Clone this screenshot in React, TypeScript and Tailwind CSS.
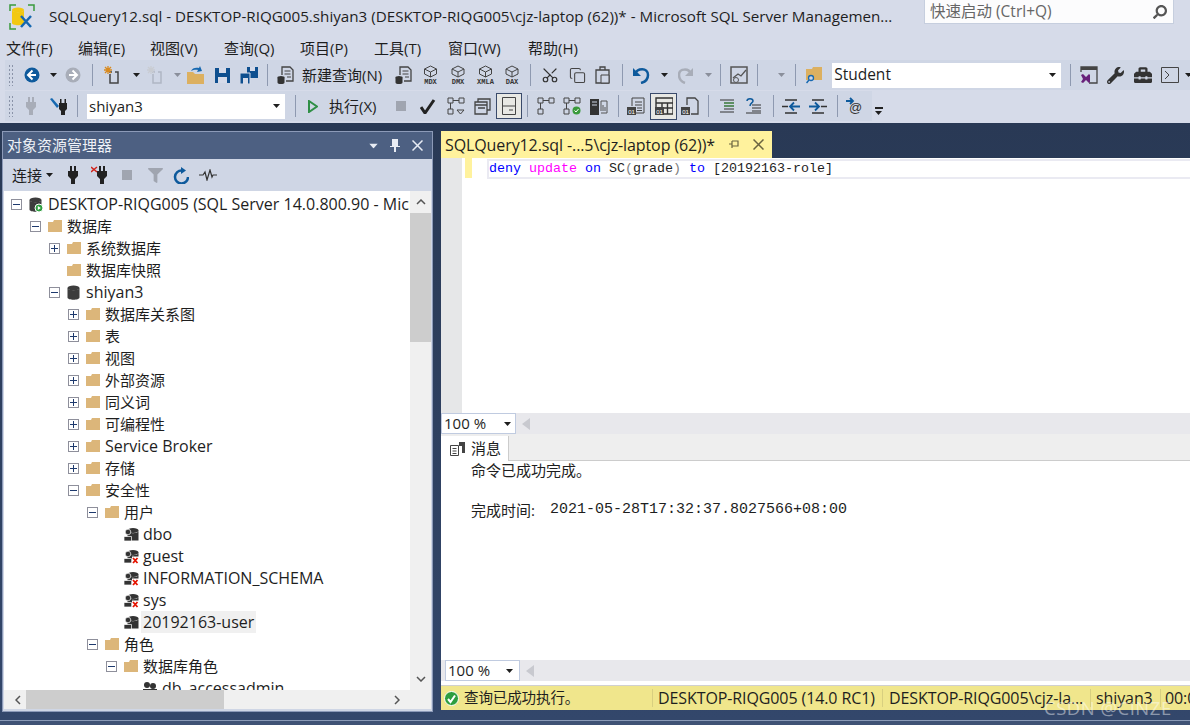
import type { ReactNode } from "react";
import { Copy, Scissors } from "lucide-react";
import { FaToolbox, FaWrench, FaFilter, FaSearch } from "react-icons/fa";

const Svg = ({ w, h, className = "", children }: { w: number; h: number; className?: string; children: ReactNode }) => (
  <svg width={w} height={h} viewBox={`0 0 ${w} ${h}`} className={`shrink-0 ${className}`}>
    {children}
  </svg>
);

const Grip = ({ className = "" }: { className?: string }) => (
  <div className={`w-[5px] h-[22px] shrink-0 bg-[radial-gradient(#8a93a8_1px,transparent_1px)] bg-[length:3px_4px] ${className}`} />
);
const Sep = ({ className = "" }: { className?: string }) => <div className={`w-px h-[22px] shrink-0 bg-[#8e99b0] ${className}`} />;
const Drop = ({ className = "", color = "#1e1e1e" }: { className?: string; color?: string }) => (
  <Svg w={7} h={4} className={className}>
    <path d="M0 0h7L3.5 4z" fill={color} />
  </Svg>
);

const Folder = ({ className = "" }: { className?: string }) => (
  <Svg w={14} h={12} className={className}>
    <path d="M0 2h5l1-2h8v12H0z" fill="#dcb67a" />
  </Svg>
);

const Circle = ({ dir, color, className = "" }: { dir: "l" | "r"; color: string; className?: string }) => (
  <Svg w={16} h={16} className={className}>
    <circle cx="8" cy="8" r="7.5" fill={color} />
    <path d={dir === "l" ? "M8.5 3.5 4 8l4.5 4.5M4.5 8H12" : "M7.5 3.5 12 8l-4.5 4.5M11.5 8H4"} stroke="#fff" strokeWidth="2" fill="none" />
  </Svg>
);

const NewItem = ({ muted, className = "" }: { muted?: boolean; className?: string }) => (
  <Svg w={20} h={20} className={className}>
    <path d="M6 7h3m3 0h3v11H7v-9" stroke={muted ? "#b0b6c4" : "#444"} strokeWidth="1.5" fill="none" />
    <path d="M5 1v8M1 5h8M2 2l6 6M8 2 2 8" stroke={muted ? "#c9ccd2" : "#d98a1f"} strokeWidth="1.3" />
  </Svg>
);

const Floppy = ({ className = "" }: { className?: string }) => (
  <Svg w={15} h={15} className={className}>
    <path d="M0 0h15v15H0z" fill="#0e4f8f" />
    <path d="M4 0h7v5H4zM3 9h9v6H3z" fill="#d6dbe9" />
  </Svg>
);

const SaveAll = ({ className = "" }: { className?: string }) => (
  <Svg w={18} h={17} className={className}>
    <path d="M7 0h11v11H7z" fill="#0e4f8f" />
    <path d="M10 0h5v4h-5z" fill="#d6dbe9" />
    <path d="M0 6h10v11H0z" fill="#0e4f8f" stroke="#d6dbe9" />
    <path d="M3 11h5v6H3z" fill="#d6dbe9" />
  </Svg>
);

const QueryDoc = ({ className = "" }: { className?: string }) => (
  <Svg w={18} h={18} className={className}>
    <path d="M5 9V1h8l3 3v11H9" stroke="#444" strokeWidth="1.3" fill="none" />
    <path d="M7.5 5h6M7.5 8h6M10 11h4" stroke="#444" />
    <ellipse cx="4" cy="11.5" rx="3.5" ry="1.5" fill="#333" />
    <path d="M.5 11.5v5c0 2 7 2 7 0v-5z" fill="#333" />
  </Svg>
);

const Cube = ({ label, w, className = "" }: { label: string; w: number; className?: string }) => (
  <Svg w={w} h={20} className={className}>
    <path d={`M${w / 2} 1l6 3v5l-6 3-6-3V4zM${w / 2 - 6} 4l6 3 6-3M${w / 2} 7v5`} stroke="#444" fill="none" />
    <text x={w / 2} y="19" textAnchor="middle" fontSize="7" fontWeight="700" fontFamily="Liberation Mono, monospace" fill="#333">
      {label}
    </text>
  </Svg>
);

const Plug = ({ color, className = "" }: { color: string; className?: string }) => (
  <Svg w={10} h={18} className={className}>
    <path d="M2 0h2v5H2zM6 0h2v5H6zM0 5h10v5l-3 3v5H3v-5l-3-3z" fill={color} />
  </Svg>
);

const Plan = ({ variant, className = "" }: { variant: "a" | "b" | "c"; className?: string }) => (
  <Svg w={18} h={18} className={className}>
    <path d="M1 1h5v5H1zM1 12h5v5H1zM12 1h5v5h-5z" fill="none" stroke="#444" />
    <path d="M6 3.5h6M3.5 6v6" stroke="#444" />
    {variant === "a" && <path d="M10 13h7l-3.5 4z" fill="none" stroke="#444" />}
    {variant === "c" && <circle cx="13.5" cy="13.5" r="4" fill="#3a9b3c" />}
    {variant === "c" && <path d="M11.5 13.5l1.5 1.5 2.5-3" stroke="#fff" fill="none" />}
  </Svg>
);

const Result = ({ variant, className = "" }: { variant: "text" | "grid" | "file"; className?: string }) => (
  <Svg w={18} h={18} className={className}>
    {variant === "text" && <path d="M5 9V1h12v15H9M8 5h7M8 8h7M10 11h5M10 13.5h5" stroke="#444" fill="none" />}
    {variant === "grid" && <path d="M1 1h17v5H1zM1 6h17v11H1zM7 6v11M12.500 6v11M1 11h17" stroke="#333" strokeWidth="1.4" fill="none" />}
    {variant === "file" && <path d="M6 8V1h8l3 3v13H10" stroke="#444" strokeWidth="1.3" fill="none" />}
    <path d="M0 10h9v8H0z" fill="#444" />
    <text x="4.500" y="16.500" fontSize="6" textAnchor="middle" fontFamily="Liberation Sans, sans-serif" fill="#fff">
      01
    </text>
  </Svg>
);

const UserDb = ({ denied, className = "" }: { denied?: boolean; className?: string }) => (
  <Svg w={15} h={15} className={className}>
    <ellipse cx="9" cy="3.500" rx="5.500" ry="2.500" fill="#333" />
    <path d="M3.500 4v9.500h11V4c-1 3-10 3-11 0z" fill="#333" />
    <circle cx="4" cy="5" r="2.800" fill="#333" stroke="#fff" strokeWidth=".7" />
    <path d="M0 14V9.500h7.500V14z" fill="#333" stroke="#fff" strokeWidth=".7" />
    {denied && <rect x="8" y="7.500" width="7" height="7.500" fill="#fff" />}
    {denied && <path d="M9 9l4.500 5M13.500 9 9 14" stroke="#e51400" strokeWidth="1.800" />}
  </Svg>
);

const Expander = ({ open }: { open: boolean }) => (
  <span className="w-[11px] h-[11px] border border-[#8e8f9b] bg-white flex items-center justify-center shrink-0 relative">
    <span className="w-[7px] h-px bg-[#1e3a6e]" />
    {!open && <span className="absolute w-px h-[7px] bg-[#1e3a6e]" />}
  </span>
);

type Row = { n: number; label: string; exp?: "open" | "closed"; icon: "folder" | "db" | "server" | "user" | "denied" | "role"; selected?: boolean };

const rows: Row[] = [
  { n: 0, label: "DESKTOP-RIQG005 (SQL Server 14.0.800.90 - Microsoft SQL Server)", exp: "open", icon: "server" },
  { n: 1, label: "数据库", exp: "open", icon: "folder" },
  { n: 2, label: "系统数据库", exp: "closed", icon: "folder" },
  { n: 2, label: "数据库快照", icon: "folder" },
  { n: 2, label: "shiyan3", exp: "open", icon: "db" },
  { n: 3, label: "数据库关系图", exp: "closed", icon: "folder" },
  { n: 3, label: "表", exp: "closed", icon: "folder" },
  { n: 3, label: "视图", exp: "closed", icon: "folder" },
  { n: 3, label: "外部资源", exp: "closed", icon: "folder" },
  { n: 3, label: "同义词", exp: "closed", icon: "folder" },
  { n: 3, label: "可编程性", exp: "closed", icon: "folder" },
  { n: 3, label: "Service Broker", exp: "closed", icon: "folder" },
  { n: 3, label: "存储", exp: "closed", icon: "folder" },
  { n: 3, label: "安全性", exp: "open", icon: "folder" },
  { n: 4, label: "用户", exp: "open", icon: "folder" },
  { n: 5, label: "dbo", icon: "user" },
  { n: 5, label: "guest", icon: "denied" },
  { n: 5, label: "INFORMATION_SCHEMA", icon: "denied" },
  { n: 5, label: "sys", icon: "denied" },
  { n: 5, label: "20192163-user", icon: "user", selected: true },
  { n: 4, label: "角色", exp: "open", icon: "folder" },
  { n: 5, label: "数据库角色", exp: "open", icon: "folder" },
  { n: 6, label: "db_accessadmin", icon: "role" },
];

const TreeIcon = ({ icon }: { icon: Row["icon"] }) => {
  if (icon === "folder") return <Folder />;
  if (icon === "user") return <UserDb />;
  if (icon === "denied") return <UserDb denied />;
  if (icon === "role")
    return (
      <Svg w={14} h={14}>
        <circle cx="4" cy="4" r="3" fill="#333" />
        <circle cx="10" cy="5" r="3" fill="#333" />
        <path d="M0 13V8h14v5z" fill="#333" />
      </Svg>
    );
  return (
    <Svg w={14} h={15}>
      <ellipse cx="6.500" cy="3" rx="6" ry="2.500" fill="#3c3c3c" />
      <path d="M.5 3v9.500c0 3 12 3 12 0V3c-1 3-11 3-12 0z" fill="#3c3c3c" />
      {icon === "server" && <circle cx="10" cy="11" r="4" fill="#2e9e3f" stroke="#fff" />}
      {icon === "server" && <path d="M8.800 9v4l3-2z" fill="#fff" />}
    </Svg>
  );
};

export default function App() {
  return (
    <div className="w-[1190px] h-[725px] overflow-hidden flex flex-col bg-[#d6dbe9] text-[15px] text-[#1e1e1e] font-['Open_Sans','Noto_Sans_CJK_SC',sans-serif] relative">
      {/* title bar */}
      <div className="h-[36px] flex items-start shrink-0">
        <Svg w={26} h={26} className="ml-[9px] mt-[4px]">
          <path d="M1 7V1h6M19 1h6v6M1 19v6h6" stroke="#3a9b3c" strokeWidth="1.500" fill="none" />
          <ellipse cx="9" cy="6" rx="6" ry="2.500" fill="#f2c811" />
          <path d="M3 6v13c0 3 12 3 12 0V6c-1 3-11 3-12 0z" fill="#f2c811" />
          <path d="M12 12l10 11M22 12 12 23" stroke="#1668b0" strokeWidth="2.500" />
        </Svg>
        <div className="ml-[14px] mt-[5px] w-[873px] whitespace-nowrap text-[15.2px]">
          SQLQuery12.sql - DESKTOP-RIQG005.shiyan3 (DESKTOP-RIQG005\cjz-laptop (62))* - Microsoft SQL Server Managemen...
        </div>
        <div className="ml-[2px] w-[250px] h-[24px] bg-[#fcfcfd] border border-[#c6cede] border-t-0 flex items-center pl-[5px] pr-[6px] text-[#666] text-[15.5px]">
          <span className="flex-1">快速启动 (Ctrl+Q)</span>
          <FaSearch className="text-[#555] -scale-x-100" size={14} />
        </div>
      </div>

      {/* menu */}
      <div className="h-[24px] flex items-center shrink-0 pl-[6px] text-[15px]">
        <span className="w-[72px]">文件(F)</span>
        <span className="w-[72px]">编辑(E)</span>
        <span className="w-[74px]">视图(V)</span>
        <span className="w-[76px]">查询(Q)</span>
        <span className="w-[74px]">项目(P)</span>
        <span className="w-[74px]">工具(T)</span>
        <span className="w-[80px]">窗口(W)</span>
        <span>帮助(H)</span>
      </div>

      {/* toolbar 1 */}
      <div className="h-[30px] ml-[5px] bg-[#cfd6e5] flex items-center pl-[3px] shrink-0">
        <Grip />
        <Circle dir="l" color="#0e5a9c" className="ml-[11px]" />
        <Drop className="ml-[10px]" />
        <Circle dir="r" color="#a8adb8" className="ml-[8px]" />
        <Sep className="ml-[11px]" />
        <NewItem className="ml-[10px]" />
        <Drop className="ml-[10px]" />
        <NewItem muted className="ml-[6px]" />
        <Drop color="#8a8f9b" className="ml-[8px]" />
        <Svg w={17} h={18} className="ml-[6px]">
          <path d="M0 6h6l2 2h9v10H0z" fill="#dcb060" />
          <path d="M4 5c1-3 5-4 8-3l1-2 2 5-5 1 1-2c-2-.5-5 0-7 1z" fill="#1668b0" />
        </Svg>
        <Floppy className="ml-[11px]" />
        <SaveAll className="ml-[10px]" />
        <Sep className="ml-[9px]" />
        <QueryDoc className="ml-[9px]" />
        <span className="ml-[7px] w-[82px] whitespace-nowrap text-[15px]">新建查询(N)</span>
        <QueryDoc className="ml-[13px]" />
        <Cube label="MDX" w={17} className="ml-[9px]" />
        <Cube label="DMX" w={18} className="ml-[10px]" />
        <Cube label="XMLA" w={19} className="ml-[9px]" />
        <Cube label="DAX" w={18} className="ml-[8px]" />
        <Sep className="ml-[9px]" />
        <Scissors size={18} strokeWidth={1.600} color="#333" className="ml-[10px] shrink-0 -rotate-90" />
        <Copy size={17} strokeWidth={1.500} color="#444" className="ml-[10px] shrink-0" />
        <Svg w={15} h={18} className="ml-[9px]">
          <path d="M1 4h13v13H1zM5 4V1h5v3" stroke="#444" strokeWidth="1.300" fill="none" />
          <path d="M6 9h8v8H6z" stroke="#444" fill="#cfd6e5" />
        </Svg>
        <Sep className="ml-[12px]" />
        <Svg w={17} h={18} className="ml-[10px]">
          <path d="M2 8c2-6 13-7 13 1 0 4-3 7-7 8" stroke="#0e5a9c" strokeWidth="2.500" fill="none" />
          <path d="M0 2v8h8z" fill="#0e5a9c" />
        </Svg>
        <Drop className="ml-[11px]" />
        <Svg w={15} h={18} className="ml-[10px]">
          <path d="M13 8C11 2 1 2 1 9c0 4 3 7 6 8" stroke="#a8adb8" strokeWidth="2.500" fill="none" />
          <path d="M15 2v8H7z" fill="#a8adb8" />
        </Svg>
        <Drop color="#8a8f9b" className="ml-[12px]" />
        <Sep className="ml-[8px]" />
        <Svg w={18} h={18} className="ml-[9px]">
          <path d="M1 1h16v16H1z" stroke="#555" strokeWidth="1.500" fill="none" />
          <path d="M3 12l5-4 3 2 5-6" stroke="#555" strokeWidth="1.300" fill="none" />
          <circle cx="6" cy="14" r="2.500" fill="#cfd6e5" stroke="#555" />
        </Svg>
        <Sep className="ml-[9px]" />
        <Drop color="#8a8f9b" className="ml-[20px]" />
        <Sep className="ml-[10px]" />
        <Svg w={16} h={18} className="ml-[10px]">
          <path d="M0 3h6l1-2h9v13H0z" fill="#dcb060" />
          <circle cx="5" cy="12" r="2.500" fill="#cfd6e5" stroke="#1668b0" strokeWidth="1.300" />
          <path d="M3 14l-2.500 3" stroke="#1668b0" strokeWidth="1.500" />
        </Svg>
        <div className="ml-[10px] w-[229px] h-[25px] bg-white flex items-center pl-[2px] pr-[5px] shrink-0 text-[15.5px]">
          <span className="flex-1">Student</span>
          <Drop />
        </div>
        <Sep className="ml-[9px]" />
        <Svg w={18} h={18} className="ml-[9px]">
          <path d="M1 6V1h16v16H9" stroke="#444" strokeWidth="1.300" fill="none" />
          <path d="M1 1h16v3H1z" fill="#444" />
          <path d="M1 9l2-1 3 3 3-3 1 1v7l-1 1-3-3-3 3-2-1 2-3z" fill="#68217a" />
        </Svg>
        <FaWrench size={17} color="#333" className="ml-[9px] shrink-0" />
        <FaToolbox size={18} color="#333" className="ml-[10px] shrink-0" />
        <Svg w={18} h={16} className="ml-[9px]">
          <path d="M.5.5h17v15H.5z" stroke="#444" fill="none" />
          <path d="M4 4l4 4-4 4" stroke="#444" fill="none" />
        </Svg>
        <Drop className="ml-[6px]" />
      </div>

      {/* toolbar 2 */}
      <div className="h-[30px] mt-px flex items-center shrink-0">
        <div className="w-[867px] h-[30px] ml-[5px] bg-[#cfd6e5] flex items-center pl-[3px] shrink-0">
          <Grip />
          <Plug color="#a8adb8" className="ml-[13px]" />
          <Svg w={17} h={18} className="ml-[14px]">
            <path d="M9 6h8v6l-2 2v4h-4v-4l-2-2z M10 2h1.500v4H10zM14.500 2H16v4h-1.500z" fill="#222" />
            <path d="M0 2l2-1 7 8-2 2z" fill="#1668b0" />
          </Svg>
          <Sep className="ml-[10px]" />
          <div className="ml-[9px] w-[198px] h-[25px] bg-white flex items-center pl-[2px] pr-[5px] shrink-0">
            <span className="flex-1">shiyan3</span>
            <Drop />
          </div>
          <Sep className="ml-[10px]" />
          <Svg w={10} h={13} className="ml-[12px]">
            <path d="M1 1l8 5.500L1 12z" fill="none" stroke="#2f8f46" strokeWidth="2" />
          </Svg>
          <span className="ml-[11px] w-[49px] whitespace-nowrap text-[15px]">执行(X)</span>
          <div className="ml-[18px] w-[10px] h-[10px] bg-[#a0a5b0] shrink-0" />
          <Svg w={16} h={15} className="ml-[14px]">
            <path d="M1 8l4 6L14 1" stroke="#222" strokeWidth="3" fill="none" />
          </Svg>
          <Plan variant="a" className="ml-[11px]" />
          <Svg w={17} h={17} className="ml-[9px]">
            <path d="M4 4V1h12v11h-3M1 4h12v12H1zM1 7h12M4 10h7" stroke="#444" strokeWidth="1.300" fill="none" />
          </Svg>
          <div className="ml-[5px] w-[26px] h-[26px] bg-[#e8e8e4] border border-[#3a4a6b] flex items-center justify-center shrink-0">
            <Svg w={14} h={18}>
              <path d="M.5.5h13v17H.5zM.5 9h13M7 13h4" stroke="#444" fill="none" />
            </Svg>
          </div>
          <Sep className="ml-[5px]" />
          <Plan variant="b" className="ml-[9px]" />
          <Plan variant="c" className="ml-[8px]" />
          <Svg w={18} h={18} className="ml-[9px]">
            <path d="M0 2h9v16H0z" fill="#333" />
            <path d="M2 5h5M2 8h5" stroke="#cfd6e5" />
            <path d="M11 14V4h6v12h-6M13 14V8M15 14v-4" stroke="#555" fill="none" />
          </Svg>
          <Sep className="ml-[10px]" />
          <Result variant="text" className="ml-[8px]" />
          <div className="ml-[5px] w-[27px] h-[27px] bg-[#e8e8e4] border border-[#3a4a6b] flex items-center justify-center shrink-0">
            <Result variant="grid" />
          </div>
          <Result variant="file" className="ml-[4px]" />
          <Sep className="ml-[9px]" />
          <Svg w={14} h={14} className="ml-[11px]">
            <path d="M0 1h14M4 4h10M4 7h10M4 10h10M0 13h14" stroke="#333" />
            <path d="M4 4h10M4 7h10" stroke="#3a9b3c" />
          </Svg>
          <Svg w={15} h={16} className="ml-[12px]">
            <path d="M1 3c0-3 6-3 6 0 0 2-3 2-3 5" stroke="#0e5a9c" strokeWidth="1.500" fill="none" />
            <path d="M6 7h9M6 10h9M6 13h9M0 15h15" stroke="#333" />
          </Svg>
          <Sep className="ml-[12px]" />
          <Svg w={18} h={15} className="ml-[8px]">
            <path d="M3 1h12M0 7.500h6M3 14h12" stroke="#333" strokeWidth="1.500" />
            <path d="M18 7.500H9M12 3.500 8 7.500l4 4" stroke="#0e5a9c" strokeWidth="1.800" fill="none" />
          </Svg>
          <Svg w={18} h={15} className="ml-[9px]">
            <path d="M3 1h12M12 7.500h6M3 14h12" stroke="#333" strokeWidth="1.500" />
            <path d="M0 7.500h9M6 3.500l4 4-4 4" stroke="#0e5a9c" strokeWidth="1.800" fill="none" />
          </Svg>
          <Sep className="ml-[10px]" />
          <Svg w={18} h={18} className="ml-[8px]">
            <path d="M0 4h6M4 1l3 3-3 3" stroke="#0e5a9c" strokeWidth="1.800" fill="none" />
            <text x="3" y="15" fontSize="13" fontFamily="Liberation Sans, sans-serif" fill="#333">
              @
            </text>
          </Svg>
        </div>
        <div className="ml-[3px] w-[8px] flex flex-col gap-[2px] mt-[10px]">
          <div className="h-[2px] bg-[#222]" />
          <Drop />
        </div>
      </div>

      {/* workspace */}
      <div className="mt-[2px] h-[597px] shrink-0 bg-linear-to-b from-[#293955] to-[#33476b] flex pt-[8px] pb-[8px] pl-[2px]">
        {/* object explorer */}
        <div className="w-[431px] h-[581px] flex flex-col border border-[#8c9ab8] bg-[#cfd6e5] shrink-0">
          <div className="h-[27px] bg-[#4d6082] flex items-center pl-[4px] pr-[9px] text-[#eef1f7] shrink-0">
            <span className="flex-1 text-[15px]">对象资源管理器</span>
            <Drop color="#e8ecf4" className="scale-125" />
            <Svg w={10} h={13} className="ml-[13px]">
              <path d="M2 0h6v7h2v1H6v5H4V8H0V7h2z" fill="#e8ecf4" />
            </Svg>
            <Svg w={11} h={11} className="ml-[12px]">
              <path d="M.5.500l10 10M10.500.500l-10 10" stroke="#e8ecf4" strokeWidth="1.500" />
            </Svg>
          </div>
          <div className="h-[32px] flex items-center pl-[9px] shrink-0">
            <span className="text-[15px]">连接</span>
            <Drop className="ml-[4px]" />
            <Plug color="#222" className="ml-[15px]" />
            <Svg w={18} h={18} className="ml-[13px]">
              <path d="M8 0v5h2V0zM12 0v5h2V0zM6 5h10v5l-3 3v5H9v-5l-3-3z" fill="#222" />
              <path d="M0 1l6 5M6 1 0 6" stroke="#d0241c" strokeWidth="1.500" />
            </Svg>
            <div className="ml-[13px] w-[10px] h-[10px] bg-[#a0a5b0] shrink-0" />
            <FaFilter size={15} color="#a0a5b0" className="ml-[16px] shrink-0" />
            <Svg w={16} h={17} className="ml-[10px]">
              <path d="M9 3.500A6.500 6.500 0 1 0 15 10" stroke="#0e5a9c" strokeWidth="2.500" fill="none" />
              <path d="M8 0v7l5-3.500z" fill="#0e5a9c" />
            </Svg>
            <Svg w={18} h={12} className="ml-[10px]">
              <path d="M0 6h4l2-3 2 8 3-10 2 7 1-2h4" stroke="#333" strokeWidth="1.200" fill="none" />
            </Svg>
          </div>
          <div className="flex-1 min-h-0 ml-px mr-px mb-[2px] bg-white flex flex-col">
            <div className="flex-1 min-h-0 flex">
              <div className="flex-1 min-w-0 overflow-hidden pt-[2px]">
                {rows.map((r) => (
                  <div key={r.label} className="h-[22px] flex items-center whitespace-nowrap relative">
                    <div className={`flex items-center ${r.n === 0 ? "pl-[7px]" : r.n === 1 ? "pl-[26px]" : r.n === 2 ? "pl-[45px]" : r.n === 3 ? "pl-[64px]" : r.n === 4 ? "pl-[83px]" : r.n === 5 ? "pl-[102px]" : "pl-[121px]"}`}>
                      <span className="w-[18px] flex shrink-0">{r.exp && <Expander open={r.exp === "open"} />}</span>
                      <span className="w-[19px] flex shrink-0">
                        <TreeIcon icon={r.icon} />
                      </span>
                      <span className={`leading-[22px] ${/^[\x00-\x7f]+$/.test(r.label) ? "text-[16px]" : "text-[15px]"} ${r.selected ? "bg-[#f0f0f0] -ml-[2px] pl-[2px] pr-[2px]" : ""}`}>{r.label}</span>
                    </div>
                  </div>
                ))}
              </div>
              <div className="w-[21px] shrink-0 flex flex-col items-center bg-[#f0f0f0]">
                <div className="h-[22px] flex items-center">
                  <Svg w={10} h={6}>
                    <path d="M1 5l4-4 4 4" stroke="#555" strokeWidth="1.500" fill="none" />
                  </Svg>
                </div>
                <div className="w-full h-[129px] bg-[#cdcdcd]" />
                <div className="flex-1" />
                <div className="h-[22px] flex items-center">
                  <Svg w={10} h={6}>
                    <path d="M1 1l4 4 4-4" stroke="#555" strokeWidth="1.500" fill="none" />
                  </Svg>
                </div>
              </div>
            </div>
            <div className="h-[19px] bg-[#f0f0f0] flex items-center shrink-0">
              <Svg w={6} h={10} className="ml-[11px]">
                <path d="M5 1 1 5l4 4" stroke="#555" strokeWidth="1.500" fill="none" />
              </Svg>
              <div className="ml-[5px] w-[198px] h-[19px] bg-[#cdcdcd]" />
              <div className="flex-1" />
              <Svg w={6} h={10} className="mr-[31px]">
                <path d="M1 1l4 4-4 4" stroke="#555" strokeWidth="1.500" fill="none" />
              </Svg>
            </div>
          </div>
        </div>

        {/* query window */}
        <div className="ml-[8px] flex-1 min-w-0 flex flex-col h-[581px]">
          <div className="h-[27px] w-[331px] bg-[#fff29d] flex items-center pl-[4px] pr-[8px] shrink-0 whitespace-nowrap">
            <span className="flex-1 text-[16px] tracking-[-0.1px]">SQLQuery12.sql -...5\cjz-laptop (62))*</span>
            <Svg w={11} h={9}>
              <path d="M0 4h3M3 1v7M3 1h6v5H3" stroke="#6b6440" strokeWidth="1.200" fill="none" />
            </Svg>
            <Svg w={11} h={11} className="ml-[13px]">
              <path d="M.5.500l10 10M10.500.500l-10 10" stroke="#6b6440" strokeWidth="1.500" />
            </Svg>
          </div>
          <div className="h-[255px] bg-white flex shrink-0">
            <div className="w-[21px] bg-[#e6e7e8] shrink-0" />
            <div className="ml-[3px] w-[7px] h-[20px] bg-[#fff29d] shrink-0" />
            <div className="ml-[15px] flex-1 h-[20px] mt-[1px] border-t-2 border-b-2 border-l-2 border-[#eaeaf2] flex items-center font-['Liberation_Mono','Noto_Sans_CJK_SC',monospace] text-[13.33px] whitespace-pre">
              <span className="text-[#0000ff]">deny</span>
              <span> </span>
              <span className="text-[#ff00ff]">update</span>
              <span> </span>
              <span className="text-[#0000ff]">on</span>
              <span> SC</span>
              <span className="text-[#808080]">(</span>
              <span>grade</span>
              <span className="text-[#808080]">)</span>
              <span> </span>
              <span className="text-[#0000ff]">to</span>
              <span> [20192163-role]</span>
            </div>
          </div>
          <div className="h-[21px] bg-[#e8e8ec] flex items-center shrink-0">
            <div className="w-[75px] h-[21px] bg-white border border-[#c0cbe0] flex items-center pl-[2px] pr-[4px] text-[15px]">
              <span className="flex-1">100 %</span>
              <Drop />
            </div>
            <Svg w={8} h={12} className="ml-[6px]">
              <path d="M8 0v12L0 6z" fill="#c8c9cf" />
            </Svg>
          </div>
          <div className="h-[27px] bg-[#eeeeee] border-b border-[#cccccc] flex items-end shrink-0">
            <div className="w-[68px] h-[25px] -mb-px bg-white border-r border-[#cccccc] flex items-center pl-[9px]">
              <Svg w={15} h={15}>
                <path d="M.5 4.500h8v10h-8zM2.500 7.500h4M2.500 10h4M2.500 12.500h4" stroke="#444" fill="none" />
                <path d="M9 1h6v11h-3V5H9z" fill="#444" />
              </Svg>
              <span className="ml-[6px] text-[15px]">消息</span>
            </div>
          </div>
          <div className="h-[199px] bg-white pl-[30px] text-[15px] shrink-0">
            <div className="h-[20px] leading-[18px]">命令已成功完成。</div>
            <div className="h-[19px]" />
            <div className="h-[20px] leading-[20px] whitespace-nowrap flex">
              <span className="w-[79px]">完成时间:</span>
              <span className="font-['Liberation_Mono',monospace] text-[15px]">2021-05-28T17:32:37.8027566+08:00</span>
            </div>
          </div>
          <div className="h-[21px] bg-[#e8e8ec] flex items-center pl-[4px] shrink-0">
            <div className="w-[75px] h-[21px] bg-white border border-[#c0cbe0] flex items-center pl-[2px] pr-[6px] text-[15px]">
              <span className="flex-1">100 %</span>
              <Drop />
            </div>
            <Svg w={8} h={12} className="ml-[6px]">
              <path d="M8 0v12L0 6z" fill="#c8c9cf" />
            </Svg>
          </div>
          <div className="h-[5px] bg-white border-b border-[#d0d0d0] shrink-0" />
          <div className="h-[24px] bg-[#f0e68c] flex items-center whitespace-nowrap overflow-hidden text-[16px] tracking-[-0.1px]">
            <Svg w={15} h={15} className="ml-[3px]">
              <circle cx="7.500" cy="7.500" r="7" fill="#2e9e3f" stroke="#fff" />
              <path d="M4 8l2.500 3L11 4.500" stroke="#fff" strokeWidth="2" fill="none" />
            </Svg>
            <span className="ml-[5px] w-[188px] shrink-0 text-[14.5px]">查询已成功执行。</span>
            <span className="h-[18px] w-px bg-[#d8cf80] shrink-0" />
            <span className="ml-[5px] w-[224px] shrink-0">DESKTOP-RIQG005 (14.0 RC1)</span>
            <span className="h-[18px] w-px bg-[#d8cf80] shrink-0" />
            <span className="ml-[6px] w-[201px] shrink-0 overflow-hidden">DESKTOP-RIQG005\cjz-la...</span>
            <span className="h-[18px] w-px bg-[#d8cf80] shrink-0" />
            <span className="ml-[5px] w-[64px] shrink-0">shiyan3</span>
            <span className="h-[18px] w-px bg-[#d8cf80] shrink-0" />
            <span className="ml-[4px]">00:00:00</span>
          </div>
        </div>
      </div>

      {/* bottom strip */}
      <div className="flex-1 bg-[#3f5275] border-t border-[#8b9bb8]" />

      {/* watermark */}
      <div className="absolute left-[1044px] top-[694px] text-[18.5px] text-white/45 whitespace-nowrap tracking-[0.5px]">CSDN @CINZE</div>
    </div>
  );
}
